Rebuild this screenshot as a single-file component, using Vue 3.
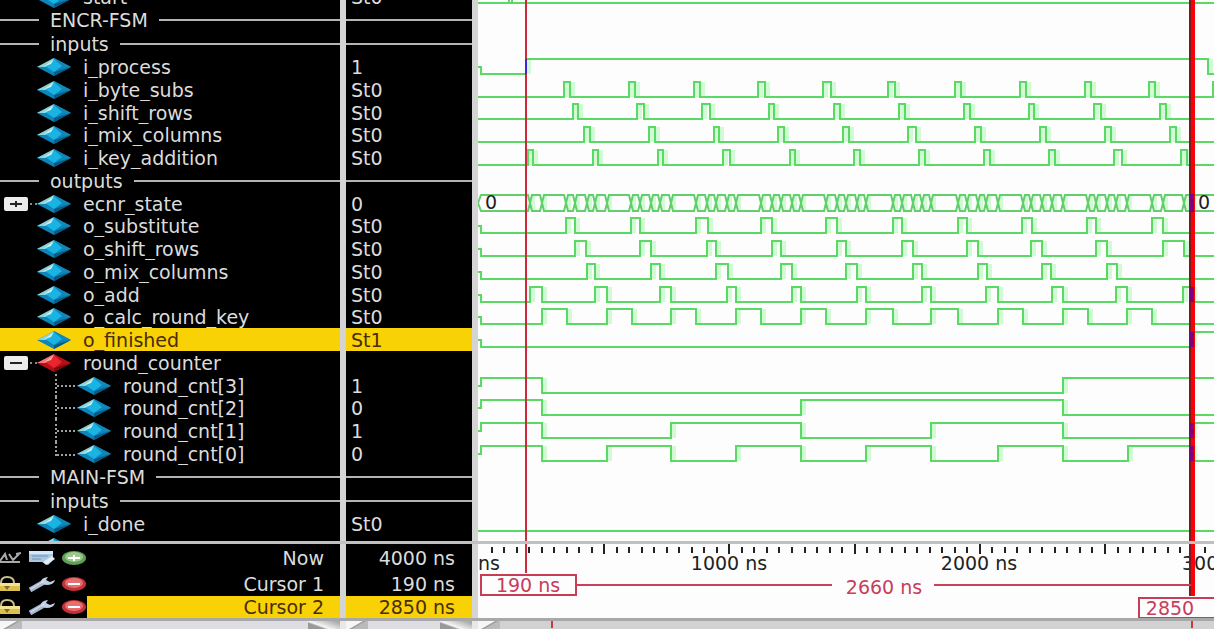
<script setup>
const ROW = [
  { kind: 'signal', name: 'start', value: 'St0', edge: 'first' },
  { kind: 'section', name: 'ENCR-FSM' },
  { kind: 'section', name: 'inputs' },
  { kind: 'signal', name: 'i_process', value: '1' },
  { kind: 'signal', name: 'i_byte_subs', value: 'St0' },
  { kind: 'signal', name: 'i_shift_rows', value: 'St0' },
  { kind: 'signal', name: 'i_mix_columns', value: 'St0' },
  { kind: 'signal', name: 'i_key_addition', value: 'St0' },
  { kind: 'section', name: 'outputs', even: true },
  { kind: 'signal', name: 'ecnr_state', value: '0', toggle: '+' },
  { kind: 'signal', name: 'o_substitute', value: 'St0' },
  { kind: 'signal', name: 'o_shift_rows', value: 'St0' },
  { kind: 'signal', name: 'o_mix_columns', value: 'St0' },
  { kind: 'signal', name: 'o_add', value: 'St0' },
  { kind: 'signal', name: 'o_calc_round_key', value: 'St0' },
  { kind: 'signal', name: 'o_finished', value: 'St1', selected: true },
  { kind: 'signal', name: 'round_counter', value: '', toggle: '-', red: true },
  { kind: 'signal', name: 'round_cnt[3]', value: '1', child: true },
  { kind: 'signal', name: 'round_cnt[2]', value: '0', child: true },
  { kind: 'signal', name: 'round_cnt[1]', value: '1', child: true },
  { kind: 'signal', name: 'round_cnt[0]', value: '0', child: true, last: true },
  { kind: 'section', name: 'MAIN-FSM' },
  { kind: 'section', name: 'inputs' },
  { kind: 'signal', name: 'i_done', value: 'St0' },
  { kind: 'signal', name: '', value: '', edge: 'last' }
]

const END = 4000
const LEFT = 478

// Each trace: y of the high level, the level before the first edge, the stub style, and the edge positions.
const traces = [
  { y: 59, level: 0, stub: true, edges: [526, 1208] },
  { y: 82, level: 0, edges: [564, 570, 629, 635, 694, 700, 758, 765, 823, 831, 888, 895, 955, 961, 1020, 1026, 1085, 1091, 1149, 1155, 1213, 1219] },
  { y: 104, level: 0, edges: [573, 578, 637, 644, 702, 710, 769, 774, 834, 840, 899, 905, 964, 970, 1029, 1034, 1094, 1101, 1160, 1166] },
  { y: 127, level: 0, edges: [584, 590, 649, 655, 714, 719, 778, 784, 843, 849, 908, 916, 975, 981, 1040, 1046, 1105, 1111, 1170, 1176] },
  { y: 150, level: 0, edges: [528, 533, 593, 598, 658, 663, 723, 730, 790, 795, 854, 860, 919, 925, 984, 990, 1049, 1055, 1114, 1122, 1181, 1187] },
  { y: 218, level: 0, stub: true, edges: [566, 575, 631, 640, 696, 708, 761, 772, 826, 837, 893, 902, 958, 967, 1022, 1032, 1087, 1096, 1152, 1163] },
  { y: 241, level: 0, stub: true, edges: [575, 586, 640, 651, 707, 716, 772, 781, 837, 846, 902, 913, 967, 978, 1031, 1042, 1096, 1107, 1163, 1184] },
  { y: 264, level: 0, stub: true, edges: [587, 595, 651, 660, 716, 728, 781, 792, 846, 857, 913, 922, 978, 987, 1042, 1051, 1107, 1117] },
  { y: 287, level: 0, stub: true, edges: [530, 542, 595, 607, 660, 671, 727, 736, 792, 801, 857, 866, 922, 931, 986, 998, 1052, 1063, 1116, 1127, 1183, 1192] },
  { y: 309, level: 0, stub: true, edges: [542, 567, 607, 632, 671, 696, 736, 761, 801, 826, 866, 893, 931, 958, 998, 1023, 1063, 1088, 1127, 1152] },
  { y: 332, level: 0, stub: true, edges: [1192] },
  { y: 378, level: 1, stub: true, edges: [542, 1063] },
  { y: 400, level: 1, stub: true, edges: [542, 801, 1063] },
  { y: 423, level: 1, stub: true, edges: [542, 671, 801, 931, 1063, 1192] },
  { y: 446, level: 1, stub: true, edges: [542, 607, 671, 736, 801, 866, 931, 998, 1063, 1128, 1192] },
  { y: 516, level: 0, edges: [] }
]

function tracePath(t) {
  const high = t.y
  const low = t.y + 15
  let level = t.level
  let y = level ? high : low
  let d = t.stub ? `M0 ${t.y + 8}H3V${y}` : `M0 ${y}`
  for (const x of t.edges) {
    level = 1 - level
    y = level ? high : low
    d += `H${x - LEFT}V${y}`
  }
  return d + `H${END}`
}

function glowPath(t) {
  return t.edges.map(x => `M${x - LEFT + 3} ${t.y}v15`).join('')
}

const crossings = [530, 542, 566, 575, 587, 595, 607, 631, 640, 651, 660, 671, 696, 707, 716, 727, 736, 761, 772, 781, 792, 801, 826, 837, 846, 857, 866, 893, 902, 913, 922, 931, 958, 967, 978, 986, 998, 1023, 1031, 1042, 1052, 1063, 1088, 1096, 1107, 1116, 1127, 1152, 1163, 1184, 1192]

function busPath() {
  let upper = 'M0 203L3 195'
  let lower = 'M0 203L3 211'
  let top = true
  for (const c of crossings) {
    const x = c - LEFT
    upper += `H${x - 2}L${x + 2} ${top ? 211 : 195}`
    lower += `H${x - 2}L${x + 2} ${top ? 195 : 211}`
    top = !top
  }
  return upper + `H${END}` + lower + `H${END}`
}
const busGlow = crossings.map(c => `M${c - LEFT + 3} 196v14`).join('')

const conflicts = [[194, 18], [287, 15], [332, 15], [423, 15], [446, 15]]

const ticks = Array.from({ length: 240 }, (_, i) => ({
  x: Math.round((i + 1) * 12.52),
  major: (i + 1) % 10 === 0
}))

const cursors = [
  { name: 'Now', value: '4000 ns', kind: 'now' },
  { name: 'Cursor 1', value: '190 ns', kind: 'cursor' },
  { name: 'Cursor 2', value: '2850 ns', kind: 'cursor', selected: true }
]
</script>

<template>
  <main class="viewer">
    <svg class="defs" aria-hidden="true">
      <defs>
        <symbol id="gem-blue" viewBox="0 0 34 18">
          <path d="M17 0L34 9L17 18L0 9Z" fill="#0c86ba" />
          <path d="M17 0L13 9L0 9Z" fill="#8fd3d6" />
          <path d="M17 0L34 9L22 9Z" fill="#1387b8" />
          <path d="M17 1L25 8L17 14L8 8Z" fill="#19b4e4" />
          <path d="M17 1L14 6L6 9Z" fill="#d3eee8" />
          <path d="M34 9L17 18L17 14Z" fill="#075a86" />
        </symbol>
        <symbol id="gem-red" viewBox="0 0 34 18">
          <path d="M17 0L34 9L17 18L0 9Z" fill="#b80f16" />
          <path d="M17 0L13 9L0 9Z" fill="#ef7b78" />
          <path d="M17 1L25 8L17 14L8 8Z" fill="#e8262c" />
          <path d="M17 1L14 6L6 9Z" fill="#f7b4ad" />
          <path d="M34 9L17 18L17 14Z" fill="#7d090d" />
        </symbol>
      </defs>
    </svg>

    <section class="upper">
      <table class="signals">
        <tbody>
          <tr v-for="(r, i) in ROW" :key="i"
              :class="[r.kind, r.edge, { selected: r.selected, even: r.even }]">
            <td class="name">
              <div v-if="r.kind === 'section'" class="cell section-cell">
                <span class="lead"></span><span>{{ r.name }}</span><span class="rule"></span>
              </div>
              <div v-else class="cell signal-cell" :class="{ child: r.child, last: r.last }">
                <span class="gutter">
                  <button v-if="r.toggle" type="button" class="toggle"
                          :aria-label="(r.toggle === '+' ? 'Expand ' : 'Collapse ') + r.name">
                    <svg width="24" height="14" viewBox="0 0 24 14">
                      <path d="M6 7H18" />
                      <path v-if="r.toggle === '+'" d="M12 4V10" />
                    </svg>
                  </button>
                  <span v-if="r.toggle" class="dots"></span>
                  <span v-if="r.child" class="branch"></span>
                </span>
                <svg class="gem" width="34" height="18">
                  <use :href="r.red ? '#gem-red' : '#gem-blue'" />
                </svg>
                <span class="label">{{ r.name }}</span>
              </div>
            </td>
            <td class="value">
              <div class="cell">
                <span v-if="r.kind === 'section'" class="rule"></span>
                <span v-else>{{ r.value }}</span>
              </div>
            </td>
          </tr>
        </tbody>
      </table>

      <svg class="waves" role="img" aria-label="Waveforms">
        <g class="glow">
          <path v-for="(t, i) in traces" :key="i" :d="glowPath(t)" />
          <path :d="busGlow" />
        </g>
        <g class="trace">
          <path :d="`M0 3H${END}M31 0V3M34 0V3`" />
          <path v-for="(t, i) in traces" :key="i" :d="tracePath(t)" />
          <path class="bus" :d="busPath()" />
        </g>
        <text x="7" y="209">0</text>
        <text x="720" y="209">0</text>
        <rect class="cursor-one" x="47" y="0" width="2" height="541" />
        <rect class="edge-mark" x="47" y="59" width="2" height="15" />
        <rect class="cursor-shade" x="711" y="0" width="2" height="541" />
        <rect class="cursor-two" x="713" y="0" width="4" height="541" />
        <rect v-for="c in conflicts" :key="c[0]" class="conflict" x="712" :y="c[0]" width="4" :height="c[1]" />
      </svg>
    </section>

    <section class="lower">
      <table class="cursors">
        <tbody>
          <tr v-for="c in cursors" :key="c.name" :class="[c.kind, { selected: c.selected }]">
            <td class="tools">
              <div class="cell">
                <template v-if="c.kind === 'now'">
                  <button type="button" class="tool" aria-label="Toggle time format">
                    <svg width="22" height="14" viewBox="0 0 22 14">
                      <path d="M0 10L5 3L7 9M9 3L13 9L19 3M0 11H20M16 3L21 2" fill="none" stroke="#aaa" stroke-width="2" />
                    </svg>
                  </button>
                  <button type="button" class="tool" aria-label="Edit grid and timeline">
                    <svg width="28" height="14" viewBox="0 0 28 14">
                      <path d="M1 0H25V9L20 14L14 11H1Z" fill="#a9c6e2" />
                      <path d="M1 0H25V3H1Z" fill="#d6e8f6" />
                      <path d="M4 5H20M4 8H13" stroke="#6f93b7" stroke-width="1" />
                      <path d="M15 11L24 5L27 8L18 14Z" fill="#e6edf4" />
                    </svg>
                  </button>
                  <button type="button" class="tool" aria-label="Insert cursor">
                    <svg width="24" height="14" viewBox="0 0 24 14">
                      <ellipse cx="12" cy="7" rx="12" ry="7" fill="#5f9f55" />
                      <ellipse cx="12" cy="6" rx="9" ry="5" fill="#9ac98b" />
                      <path d="M6 7H18M12 4V10" stroke="#fff" stroke-width="2" />
                    </svg>
                  </button>
                </template>
                <template v-else>
                  <button type="button" class="tool" :aria-label="'Lock ' + c.name">
                    <svg width="22" height="16" viewBox="0 0 22 16">
                      <path d="M1 7Q1 1 7 1Q14 1 14 7" fill="none" stroke="#c9bd8c" stroke-width="2" />
                      <path d="M0 7H20V15H0Z" fill="#dcc04e" />
                      <path d="M0 7H20V10H0Z" fill="#f3e28f" />
                      <path d="M4 10L7 14L10 10Z" fill="#80672a" />
                    </svg>
                  </button>
                  <button type="button" class="tool" :aria-label="'Edit ' + c.name">
                    <svg width="28" height="16" viewBox="0 0 28 16">
                      <path d="M2 14L16 6" stroke="#a9b7cf" stroke-width="5" />
                      <path d="M13 7Q12 2 20 1L18 4L22 6L27 4Q26 9 18 9Z" fill="#c3cee0" />
                      <path d="M3 13L16 5" stroke="#e3eaf3" stroke-width="1" />
                    </svg>
                  </button>
                  <button type="button" class="tool" :aria-label="'Delete ' + c.name">
                    <svg width="24" height="14" viewBox="0 0 24 14">
                      <ellipse cx="12" cy="7" rx="12" ry="7" fill="#c33236" />
                      <ellipse cx="12" cy="6" rx="9" ry="5" fill="#e67070" />
                      <path d="M6 7H18" stroke="#fff" stroke-width="2" />
                    </svg>
                  </button>
                </template>
              </div>
            </td>
            <td class="cursor-name">{{ c.name }}</td>
            <td class="cursor-value">{{ c.value }}</td>
          </tr>
        </tbody>
      </table>

      <svg class="timeline" role="img" aria-label="Timeline">
        <rect v-for="t in ticks" :key="t.x" class="tick" :x="t.x" :y="t.major ? 0 : 3" width="2" :height="t.major ? 10 : 6" />
        <text x="0" y="26">ns</text>
        <text x="251" y="26" text-anchor="middle">1000 ns</text>
        <text x="501" y="26" text-anchor="middle">2000 ns</text>
        <text x="704" y="26">3000 ns</text>
        <rect class="cursor-one" x="47" y="0" width="2" height="29" />
        <rect class="cursor-shade" x="711" y="0" width="2" height="52" />
        <rect class="cursor-two" x="713" y="0" width="4" height="52" />
        <path class="measure" d="M99 41H354M456 41H713" />
        <rect class="box" x="3" y="31" width="95" height="20" />
        <text class="red" x="50" y="48" text-anchor="middle">190 ns</text>
        <text class="red" x="406" y="50" text-anchor="middle">2660 ns</text>
        <rect class="box" x="661" y="54" width="96" height="20" />
        <text class="red" x="692" y="71" text-anchor="middle">2850</text>
      </svg>
    </section>

    <footer class="bars">
      <div class="bar names-bar"><span class="arrow left"></span><span class="thumb"></span><span class="arrow right"></span></div>
      <div class="bar values-bar"><span class="arrow left"></span><span class="thumb"></span><span class="arrow right"></span></div>
      <div class="bar wave-bar">
        <span class="arrow left"></span>
        <svg class="track"><rect x="46" y="0" width="2" height="7" /><rect x="686" y="0" width="2" height="7" /></svg>
      </div>
    </footer>
  </main>
</template>

<style>
body {
  margin: 0;
  background: #fdfdfd;
}
</style>

<style scoped>
.viewer {
  min-height: 100vh;
  display: flex;
  flex-direction: column;
  overflow: hidden;
  background: #fdfdfd;
  color: #dcdcdc;
  font-family: "DejaVu Sans", sans-serif;
  font-size: 19px;
  line-height: 22px;
}
.defs {
  position: absolute;
  width: 0;
  height: 0;
}
.upper,
.lower {
  display: flex;
}
table {
  flex: none;
  width: 478px;
  table-layout: fixed;
  border-collapse: collapse;
  background: #000;
}
td {
  padding: 0;
}
button {
  padding: 0;
  border: 0;
  background: none;
  display: block;
}
button svg {
  display: block;
}
.name {
  width: 340px;
}
.value {
  border-left: 6px solid #d4d4d4;
  border-right: 6px solid #d4d4d4;
}
.cell {
  display: flex;
  align-items: center;
  height: 23px;
  overflow: hidden;
  white-space: nowrap;
}
.signal:nth-child(4n + 3) .cell {
  height: 22px;
}
.section .cell {
  height: 24px;
}
.section:nth-child(3) .cell,
.section:nth-child(23) .cell,
.even .cell {
  height: 23px;
}
.first .cell {
  height: 8px;
  align-items: flex-end;
}
.last.signal .cell {
  height: 6px;
  align-items: flex-start;
}
.last.signal .gem {
  margin-top: 3px;
}
.value .cell {
  padding-left: 5px;
}
.section .value .cell {
  padding-left: 0;
}
.section-cell {
  gap: 11px;
}
.lead {
  width: 39px;
  height: 2px;
  background: #b4b4b4;
}
.rule {
  flex: 1;
  height: 2px;
  background: #b4b4b4;
}
.gutter {
  width: 37px;
  height: 100%;
  flex: none;
  display: flex;
  align-items: center;
}
.child .gutter {
  width: 77px;
}
.gem {
  flex: none;
}
.label {
  padding-left: 12px;
}
.toggle {
  margin-left: 4px;
  border-radius: 2px;
  background: #ececec;
}
.toggle path {
  stroke: #222;
  stroke-width: 2;
}
.dots {
  flex: 1;
  margin-left: 2px;
  border-top: 2px dotted #8a8a8a;
}
.branch {
  box-sizing: border-box;
  width: 22px;
  height: 100%;
  margin-left: 55px;
  border-left: 2px dotted #a0a0a0;
  background: repeating-linear-gradient(90deg, #a0a0a0 0 2px, #000 2px 4px) 0 50% / 100% 2px no-repeat;
}
.child.last .branch {
  height: 14px;
  align-self: flex-start;
  background-position: 0 100%;
}
.selected .name,
.selected .value,
.selected .cursor-name,
.selected .cursor-value {
  background: #f8d204;
  color: #4a2c08;
}
.waves {
  flex: 1;
  min-width: 0;
  height: 541px;
  overflow: hidden;
}
.trace path {
  fill: none;
  stroke: #5ada64;
  stroke-width: 2;
}
.trace .bus {
  stroke: #62cf6c;
}
.glow path {
  fill: none;
  stroke: #d2fad4;
  stroke-width: 4;
}
text {
  fill: #222;
}
.cursor-one {
  fill: #cc2a38;
}
.cursor-shade {
  fill: #7c1a1c;
}
.cursor-two {
  fill: #fa0008;
}
.edge-mark {
  fill: #3a28d8;
}
.conflict {
  fill: #80007c;
}
.lower {
  border-top: 3px solid #c0c0c0;
}
.cursors tr {
  height: 24px;
}
.cursors .now {
  height: 28px;
}
.cursors .selected {
  height: 22px;
}
.tools {
  width: 87px;
}
.tools .cell {
  height: 22px;
  gap: 6px;
}
.tool {
  flex: none;
}
.cursor-name {
  width: 256px;
  box-sizing: border-box;
  padding-right: 16px;
  text-align: right;
}
.cursor-value {
  border-left: 6px solid #d4d4d4;
  border-right: 6px solid #d4d4d4;
  padding-right: 17px;
  text-align: right;
}
.timeline {
  flex: 1;
  min-width: 0;
  height: 74px;
  overflow: hidden;
}
.tick {
  fill: #222;
}
.measure {
  stroke: #c8425a;
  stroke-width: 2;
}
.box {
  fill: #fdfdfd;
  stroke: #c83c56;
  stroke-width: 2;
}
.red {
  fill: #c83c5c;
}
.bars {
  flex: 1;
  min-height: 7px;
  display: flex;
  gap: 6px;
  border-top: 3px solid #a8a8a8;
  background: #e8e8e8;
}
.bar {
  display: flex;
  background: #d2d2d4;
}
.names-bar {
  width: 340px;
}
.values-bar {
  width: 126px;
}
.wave-bar {
  flex: 1;
  min-width: 0;
}
.arrow {
  width: 22px;
  background: linear-gradient(150deg, #f6f6f6 45%, #999 50%, #bbb 60%);
}
.arrow.right {
  width: 32px;
  background: linear-gradient(20deg, #999 30%, #f6f6f6 40%, #aaa 90%);
}
.thumb {
  flex: 1;
  background: #dedee2;
}
.track {
  flex: 1;
  min-width: 0;
  height: 7px;
  margin-left: 5px;
}
.track rect {
  fill: #d03838;
}
</style>
